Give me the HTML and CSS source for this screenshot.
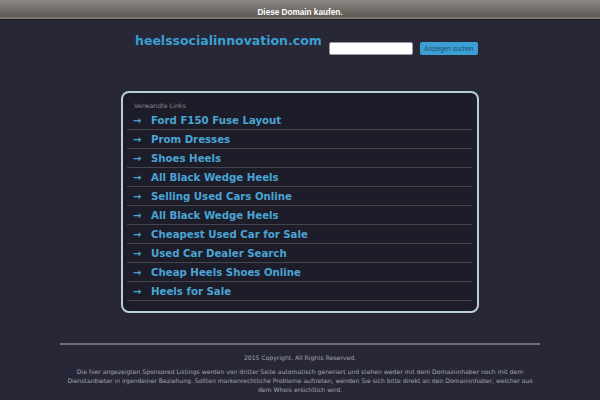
FILE: index.html
```html
<!DOCTYPE html>
<html lang="de">
<head>
<meta charset="utf-8">
<title>heelssocialinnovation.com</title>
<link rel="stylesheet" href="styles.css">
</head>
<body>
<div class="topbar"><a class="buy" href="#">Diese Domain kaufen.</a></div>
<div class="wrap">
  <div class="header">
    <div class="title">heelssocialinnovation.com</div>
    <input class="search" type="text">
    <button class="btn">Anzeigen suchen</button>
  </div>
  <div class="box">
    <div class="heading">Verwandte Links</div>
    <ul class="links">
      <li><span class="arr">→</span><a href="#">Ford F150 Fuse Layout</a></li>
      <li><span class="arr">→</span><a href="#">Prom Dresses</a></li>
      <li><span class="arr">→</span><a href="#">Shoes Heels</a></li>
      <li><span class="arr">→</span><a href="#">All Black Wedge Heels</a></li>
      <li><span class="arr">→</span><a href="#">Selling Used Cars Online</a></li>
      <li><span class="arr">→</span><a href="#">All Black Wedge Heels</a></li>
      <li><span class="arr">→</span><a href="#">Cheapest Used Car for Sale</a></li>
      <li><span class="arr">→</span><a href="#">Used Car Dealer Search</a></li>
      <li><span class="arr">→</span><a href="#">Cheap Heels Shoes Online</a></li>
      <li><span class="arr">→</span><a href="#">Heels for Sale</a></li>
    </ul>
  </div>
</div>
<div class="footer">
  <div class="copy">2015 Copyright. All Rights Reserved.</div>
  <div class="disc">Die hier angezeigten Sponsored Listings werden von dritter Seite automatisch generiert und stehen weder mit dem Domaininhaber noch mit dem Dienstanbieter in irgendeiner Beziehung. Sollten markenrechtliche Probleme auftreten, wenden Sie sich bitte direkt an den Domaininhaber, welcher aus dem Whois ersichtlich wird.</div>
</div>
</body>
</html>
```
FILE: styles.css
```css
html, body {
  margin: 0;
  padding: 0;
  background: #272737;
  font-family: "DejaVu Sans", sans-serif;
}
.topbar {
  height: 17px;
  background: linear-gradient(#8e8984, #5d5954);
  border-bottom: 2px solid #7a766f;
  box-shadow: 0 1px 0 #1a1a24;
  text-align: center;
}
.buy {
  font-family: "Liberation Sans", Arial, sans-serif;
  font-weight: bold;
  font-size: 8.2px;
  line-height: 18px;
  color: #ffffff;
  text-decoration: none;
}
.wrap {
  width: 358px;
  margin: 0 auto;
}
.header {
  display: flex;
  align-items: flex-start;
  padding: 14px 0 0 14px;
}
.title {
  font-weight: bold;
  font-size: 12.5px;
  line-height: 16px;
  color: #3c9fd1;
  margin-right: 7px;
}
.search {
  box-sizing: border-box;
  width: 84px;
  height: 13px;
  margin: 9px 7px 0 0;
  padding: 0;
  border: 1px solid #9a9aa0;
  border-radius: 2px;
  background: #ffffff;
}
.btn {
  box-sizing: border-box;
  width: 58px;
  height: 13px;
  margin: 9px 0 0 0;
  padding: 0;
  border: none;
  border-radius: 2px;
  background: #3b9fd2;
  color: #1c4c72;
  font-family: "Liberation Sans", Arial, sans-serif;
  font-size: 6.4px;
  line-height: 13px;
}
.box {
  margin-top: 36px;
  border: 2px solid #b9cfdc;
  border-radius: 8px;
  background: #1d1d29;
  padding: 0 5px 10px 4px;
}
.heading {
  padding: 8px 0 0 7px;
  height: 10px;
  font-size: 6.3px;
  line-height: 10px;
  color: #85858f;
}
.links {
  list-style: none;
  margin: 0;
  padding: 0;
}
.links li {
  display: flex;
  align-items: center;
  height: 18px;
  border-bottom: 1px solid #45454f;
  padding-left: 6px;
}
.arr {
  width: 18px;
  font-weight: bold;
  font-size: 10px;
  color: #4aa4d4;
}
.links a {
  font-weight: bold;
  font-size: 10.2px;
  color: #4aa4d4;
  text-decoration: none;
}
.footer {
  width: 480px;
  margin: 30px auto 0;
  border-top: 2px solid #6c6c7a;
  text-align: center;
  color: #a4a4ae;
  font-size: 6.1px;
  line-height: 9px;
}
.copy {
  margin-top: 8px;
}
.disc {
  margin-top: 5px;
}
```
